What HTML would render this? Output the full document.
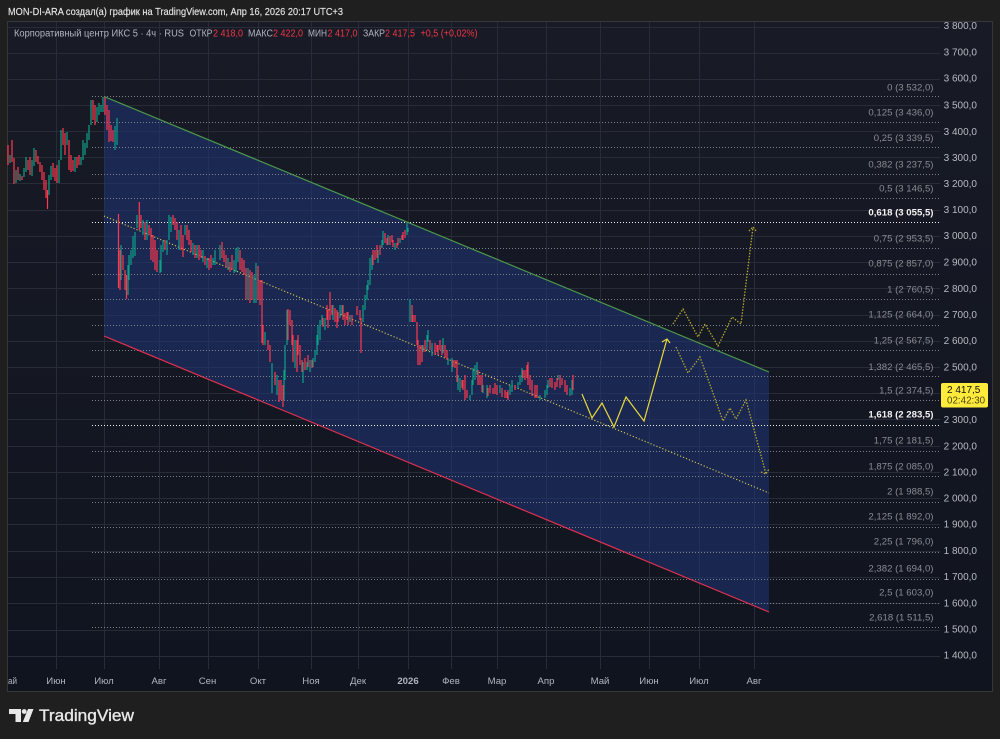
<!DOCTYPE html>
<html><head><meta charset="utf-8"><title>TradingView</title>
<style>
html,body{margin:0;padding:0;background:#1f1f1f;width:1000px;height:739px;overflow:hidden}
svg{display:block}
text{font-family:"Liberation Sans",sans-serif}
</style></head><body>
<svg xmlns="http://www.w3.org/2000/svg" width="1000" height="739" viewBox="0 0 1000 739">
<defs><linearGradient id="bg" x1="0" y1="0" x2="0" y2="1"><stop offset="0" stop-color="#181b26"/><stop offset="1" stop-color="#10141f"/></linearGradient></defs>
<rect width="1000" height="739" fill="#1f1f1f"/>
<rect x="7.5" y="21.5" width="985" height="670" fill="url(#bg)" stroke="#34363a"/>
<text x="8" y="15" font-size="10.5" fill="#e4e4e4" stroke="#e4e4e4" stroke-width=".15" textLength="335" lengthAdjust="spacingAndGlyphs">MON-DI-ARA создал(а) график на TradingView.com, Апр 16, 2026 20:17 UTC+3</text>

<!-- grid -->
<g stroke="#282c38" stroke-width="1" fill="none">
<path d="M8 27.5H940M8 53.5H940M8 79.5H940M8 105.5H940M8 131.5H940M8 157.5H940M8 183.5H940M8 210.5H940M8 236.5H940M8 262.5H940M8 288.5H940M8 315.5H940M8 341.5H940M8 367.5H940M8 393.5H940M8 419.5H940M8 446.5H940M8 472.5H940M8 498.5H940M8 524.5H940M8 551.5H940M8 577.5H940M8 603.5H940M8 630.5H940M8 656.5H940"/>
<path d="M56.5 22V669M104.5 22V669M159.5 22V669M208.5 22V669M258.5 22V669M311.5 22V669M358.5 22V669M408.5 22V669M451.5 22V669M497.5 22V669M546.5 22V669M600.5 22V669M649.5 22V669M699.5 22V669M754.5 22V669"/>
</g>

<!-- channel -->
<polygon points="104,96.5 769,372 769,612 104,336" fill="#1f3578" fill-opacity=".55"/>

<!-- fib lines -->
<g stroke="#7d8088" stroke-width="1" stroke-dasharray="1 2" fill="none">
<path d="M92 96.5H940M92 122.5H940M92 147.5H940M92 174.5H940M92 198.5H940M92 248.5H940M92 274.5H940M92 299.5H940M92 325.5H940M92 350.5H940M92 376.5H940M92 400.5H940M92 451.5H940M92 476.5H940M92 502.5H940M92 527.5H940M92 552.5H940M92 579.5H940M92 603.5H940M92 627.5H940"/>
</g>
<path d="M92 222.5H940M92 425.5H940" stroke="#f2f2f2" stroke-width="1" stroke-dasharray="1 2" fill="none"/>

<!-- channel lines -->
<line x1="104" y1="96.5" x2="769" y2="372" stroke="#4c9a4c" stroke-width="1.2"/>
<line x1="104" y1="336" x2="769" y2="612" stroke="#e0304f" stroke-width="1.2"/>
<line x1="104" y1="216" x2="769" y2="493" stroke="#d8cc50" stroke-width="1.1" stroke-dasharray="1.2 2"/>

<!-- candles -->
<path fill="none" stroke="#0fa088" stroke-width="1.2" d="M10 155V163M16 170V183M20 174V181M24 168V177M26 157V172M32 160V176M34 148V166M49 175V195M51 166V180M59 160V183M61 130V160M67 132V145M75 157V172M81 157V165M83 140V160M85 143V155M87 133V148M89 125V140M91 100V125M97 107V122M99 103V115M101 105V112M103 97V112M115 126V150M117 118V145
M121 245V280M128 265V295M129 255V280M131 250V265M133 236V258M135 232V256M137 215V228M143 220V235M147 220V240M160 260V273M161 245V272M163 240V252M167 240V255M169 215V240M171 217V232M179 230V250M185 225V235M193 243V255M197 245V258M203 250V262M207 258V268M213 258V265M215 250V265M220 245V260M228 258V270M234 260V273M236 248V272M238 247V262M248 268V300M254 275V303M256 263V303
M265 332V345M272 363V393M277 375V395M284 370V400M285 345V380M287 310V345M295 340V368M303 362V383M307 362V370M310 360V372M313 358V367M315 350V362M317 335V355M318 325V345M320 320V340M322 315V325M325 318V330M333 305V320M340 305V318M342 305V315M350 315V322M363 305V322M365 295V310M367 285V300M368 280V290M370 258V285M372 255V270M378 250V263M382 240V248M383 231V245M388 235V245M395 243V250M400 238V243M407 223V235M408 228V232
M410 299V322M423 345V352M427 335V350M428 330V342M432 343V356M443 338V353M448 358V365M452 358V372M458 375V390M460 378V392M470 395V400M472 380V395M473 368V385M475 365V380M477 362V375M483 385V393M487 385V398M500 385V393M510 385V395M512 380V392M518 382V388M520 375V385M522 368V382M540 395V400M545 390V398M547 385V395M548 380V388M558 375V380M570 388V396M572 380V395"/>
<path fill="none" stroke="#ff3a4e" stroke-width="1.2" d="M8 145V165M12 140V162M14 158V184M18 167V180M22 176V180M28 160V170M30 157V175M36 150V162M38 156V164M40 162V172M42 165V180M44 172V190M46 180V198M47.500 190V209M53 163V177M55 168V181M57 165V183M63 128V145M65 133V155M69 140V170M71 155V172M73 160V171M77 157V168M79 155V165M93 100V120M95 105V125M105 97V115M107 105V130M109 110V142M111 125V141M113 130V142
M118.500 214V288M120 250V290M123 255V270M125 270V290M126.500 275V299M139.300 202V230M141 215V228M145 222V240M149 225V235M151 228V260M153 235V262M155 240V270M157 250V272M165 240V250M173 215V225M175 218V230M177 222V240M181 225V250M183 235V257M187 225V240M189 230V245M191 240V252M195 245V258M199 245V260M201 250V258M205 256V265M209 258V270M211 255V268M222 242V258M224 250V262M226 255V268M230 262V272M232 255V270M240 250V270M242 258V272M244 260V275M246 268V300M250 270V303M252 272V300M258 266V300M260 280V305
M262 280V343M263 325V345M268 340V350M270 345V362M275 372V385M279 380V402M281 380V400M283 385V407M288 309V340M290 310V325M292 320V345M293 335V362M297 340V372M298 335V355M300 345V365M302 360V372M305 358V370M308 355V367M312 360V368M323 318V327M327 305V320M328 310V328M330 292V320M332 305V315M335 308V322M337 310V328M338 312V322M343 305V320M345 313V325M347 312V320M348 312V325M352 315V325M357 306V315M360 310V320M361 318V353M373 250V265M375 250V260M377 245V258M380 245V255M385 233V243M387 238V245M390 236V245M392 235V242M393 240V247M397 243V248M398 238V245M402 235V240M403 232V240M405 230V238
M412 305V322M413 315V322M415 315V322M417 322V345M418 340V365M420 345V365M422 345V362M425 340V352M430 340V350M435 343V355M437 345V352M438 345V355M440 340V350M442 345V355M445 345V358M447 350V360M453 360V367M455 360V368M457 360V382M462 380V388M463 380V390M465 375V400M467 390V398M478 370V385M480 375V385M482 375V392M488 388V396M490 385V393M493 388V394M495 383V394M497 385V395M502 388V397M505 390V398M507 392V398M508 390V400M515 385V390M523 370V378M525 370V380M527 365V378M528 362V385M530 375V390M532 380V396M535 385V398M537 385V398M550 378V387M552 378V388M555 382V390M557 378V387M560 375V388M562 378V385M565 380V392M567 385V395M573 375V390"/>

<!-- projections -->
<polyline points="582,394 592,418 602,403 614,427 626,397 644,421 667,339" fill="none" stroke="#e8d83a" stroke-width="1.2"/>
<polyline points="662,342 667,339 670,343" fill="none" stroke="#e8d83a" stroke-width="1.2"/>
<g fill="none" stroke="#b5a632" stroke-width="1.3" stroke-dasharray="1.5 1.5">
<polyline points="673,324 683,309 698,337 705,324 718,346 732,317 741,324 753,227"/>
<polyline points="749,231 753,227 757,232"/>
<polyline points="676,347 688,373 700,357 723,421 730,408 736,419 746,400 766,474"/>
<polyline points="761,472 766,474 769,469"/>
</g>

<!-- legend -->
<g font-size="9.800">
<text x="14" y="36.500" fill="#b2b5be" textLength="170" lengthAdjust="spacingAndGlyphs">Корпоративный центр ИКС 5 · 4ч · RUS</text>
<text x="189.500" y="36.500" fill="#b2b5be" textLength="23" lengthAdjust="spacingAndGlyphs">ОТКР</text><text x="213" y="36.500" fill="#f23645" textLength="30" lengthAdjust="spacingAndGlyphs">2 418,0</text>
<text x="248" y="36.500" fill="#b2b5be" textLength="25" lengthAdjust="spacingAndGlyphs">МАКС</text><text x="273" y="36.500" fill="#f23645" textLength="30" lengthAdjust="spacingAndGlyphs">2 422,0</text>
<text x="308" y="36.500" fill="#b2b5be" textLength="19" lengthAdjust="spacingAndGlyphs">МИН</text><text x="327.500" y="36.500" fill="#f23645" textLength="30" lengthAdjust="spacingAndGlyphs">2 417,0</text>
<text x="363" y="36.500" fill="#b2b5be" textLength="22" lengthAdjust="spacingAndGlyphs">ЗАКР</text><text x="385" y="36.500" fill="#f23645" textLength="30" lengthAdjust="spacingAndGlyphs">2 417,5</text>
<text x="420.500" y="36.500" fill="#f23645" textLength="57" lengthAdjust="spacingAndGlyphs">+0,5 (+0,02%)</text>
</g>

<!-- price axis -->
<g font-size="10" fill="#b8bac2" text-anchor="end">
<text x="977" y="29">3 800,0</text><text x="977" y="55.500">3 700,0</text><text x="977" y="81.500">3 600,0</text><text x="977" y="108.500">3 500,0</text><text x="977" y="135">3 400,0</text><text x="977" y="161">3 300,0</text><text x="977" y="187">3 200,0</text><text x="977" y="213">3 100,0</text><text x="977" y="239">3 000,0</text><text x="977" y="265.500">2 900,0</text><text x="977" y="292">2 800,0</text><text x="977" y="318">2 700,0</text><text x="977" y="344">2 600,0</text><text x="977" y="370.500">2 500,0</text><text x="977" y="423">2 300,0</text><text x="977" y="449.500">2 200,0</text><text x="977" y="475.500">2 100,0</text><text x="977" y="501.500">2 000,0</text><text x="977" y="527.500">1 900,0</text><text x="977" y="554">1 800,0</text><text x="977" y="580">1 700,0</text><text x="977" y="606.500">1 600,0</text><text x="977" y="632.500">1 500,0</text><text x="977" y="658.500">1 400,0</text>
</g>
<!-- fib labels -->
<g font-size="9.600" fill="#8a8c93" text-anchor="end">
<text x="933.500" y="90.500">0 (3 532,0)</text><text x="933.500" y="115.500">0,125 (3 436,0)</text><text x="933.500" y="141">0,25 (3 339,5)</text><text x="933.500" y="167.500">0,382 (3 237,5)</text><text x="933.500" y="191.500">0,5 (3 146,5)</text>
<text x="933.500" y="241.500">0,75 (2 953,5)</text><text x="933.500" y="266.500">0,875 (2 857,0)</text><text x="933.500" y="292.500">1 (2 760,5)</text><text x="933.500" y="317.500">1,125 (2 664,0)</text><text x="933.500" y="343.500">1,25 (2 567,5)</text><text x="933.500" y="370">1,382 (2 465,5)</text><text x="933.500" y="393.500">1,5 (2 374,5)</text>
<text x="933.500" y="443.500">1,75 (2 181,5)</text><text x="933.500" y="469.500">1,875 (2 085,0)</text><text x="933.500" y="494.500">2 (1 988,5)</text><text x="933.500" y="519.500">2,125 (1 892,0)</text><text x="933.500" y="544.500">2,25 (1 796,0)</text><text x="933.500" y="571.500">2,382 (1 694,0)</text><text x="933.500" y="595.500">2,5 (1 603,0)</text><text x="933.500" y="620.500">2,618 (1 511,5)</text>
<text x="933.500" y="215.500" fill="#f4f4f4" font-weight="bold">0,618 (3 055,5)</text>
<text x="933.500" y="417.500" fill="#f4f4f4" font-weight="bold">1,618 (2 283,5)</text>
</g>

<!-- price tag -->
<rect x="941" y="383" width="47" height="24.500" rx="2" fill="#ffeb3b"/>
<text x="947" y="393" font-size="10" fill="#111">2 417,5</text>
<text x="947" y="403.500" font-size="9.800" fill="#4a4610">02:42:30</text>

<!-- time axis -->
<g font-size="9.600" fill="#b2b5be" text-anchor="middle">
<text x="8" y="684" text-anchor="start" textLength="9" lengthAdjust="spacingAndGlyphs">ай</text>
<text x="56" y="684">Июн</text><text x="104" y="684">Июл</text><text x="159" y="684">Авг</text><text x="207.500" y="684">Сен</text><text x="258" y="684">Окт</text><text x="311" y="684">Ноя</text><text x="358" y="684">Дек</text><text x="408" y="684" font-weight="bold">2026</text><text x="451" y="684">Фев</text><text x="497" y="684">Мар</text><text x="546" y="684">Апр</text><text x="600" y="684">Май</text><text x="649" y="684">Июн</text><text x="699" y="684">Июл</text><text x="754" y="684">Авг</text>
</g>

<!-- logo -->
<g fill="#e8e8e8">
<path d="M9 709H21V722H15.500V714H9Z"/>
<circle cx="24.200" cy="711.500" r="2.400"/>
<path d="M28 709H33.500L28.500 722H22.800Z"/>
</g>
<text x="39" y="721" font-size="16.500" fill="#e8e8e8" stroke="#e8e8e8" stroke-width=".35" textLength="95" lengthAdjust="spacingAndGlyphs">TradingView</text>
</svg>
</body></html>
